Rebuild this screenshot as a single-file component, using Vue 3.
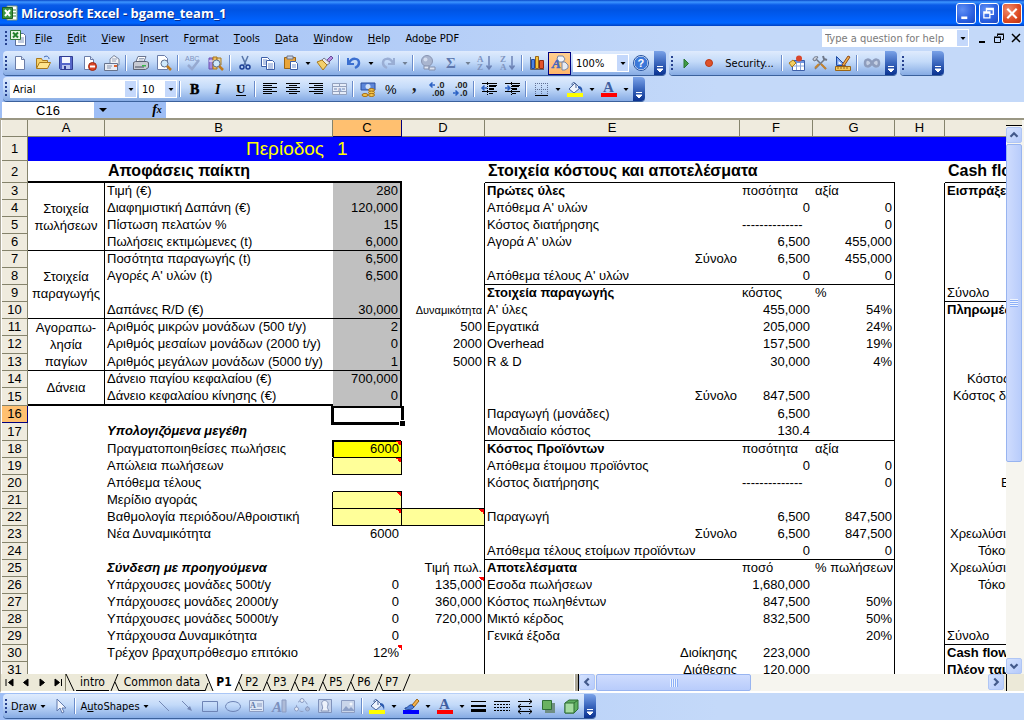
<script setup>
const menus = [
  ['', 'F', 'ile'], ['', 'E', 'dit'], ['', 'V', 'iew'], ['', 'I', 'nsert'], ['F', 'o', 'rmat'],
  ['', 'T', 'ools'], ['', 'D', 'ata'], ['', 'W', 'indow'], ['', 'H', 'elp'], ['Ado', 'b', 'e PDF'],
]

const page = '<path d="M3.5 1.5h6l3 3v10h-9z" fill="#fff" stroke="#6b7da8"/><path d="M9.5 1.5v3h3" fill="#dbe5f7" stroke="#6b7da8"/>'
const lens = '<circle cx="8.5" cy="8.5" r="3.5" fill="#cfe9fb" stroke="#5d6f8f"/><path d="M11 11l4 4" stroke="#c07a1c" stroke-width="2.5"/>'
const bucket = '<path d="M2 8l6-6 5 5-6 5z" fill="#eef4fd" stroke="#4a6499"/><path d="M5 4c0-4 4-3 4 1v2" fill="none" stroke="#4a6499"/><path d="M11 5c4 0 5 3 4 7-1-3-2-4-4-5z" fill="#2c5bb0"/>'
const bars = (list) => list.map(([x, y, w]) => `<path d="M${x} ${y}h${w}" stroke="#000"/>`).join('')

const icons = {
  excel: '<path d="M5 1h10v14H5z" fill="#fff" stroke="#7d9a7d"/><path d="M11 5h3M11 8h3M11 11h3" stroke="#3f8a3f"/><path d="M.5 2.5h10v11H.5z" fill="#3c9440" stroke="#1f5f24"/><path d="M3 5l5 6M8 5l-5 6" stroke="#fff" stroke-width="2"/>',
  book: '<path d="M5.5 3.5h8l2 2v10h-10z" fill="#fff" stroke="#5a6f9e"/><path d="M8 8h6M8 10h6M8 12h6" stroke="#7f94c0"/><path d="M.5.5h10v9H.5z" fill="#e9f5e4" stroke="#2f7a35"/><path d="M3 2.5l5 5M8 2.5l-5 5" stroke="#23812b" stroke-width="2"/>',
  new: page,
  open: '<path d="M1.5 13V3.5h5l1 2h5V8" fill="#f7d36a" stroke="#a9791d"/><path d="M1.5 13.5l3-6h11l-3 6z" fill="#ffe48c" stroke="#a9791d"/><path d="M9 2c3-2 5 0 5 2" fill="none" stroke="#3a65b5"/>',
  save: '<path d="M1.5 1.5h13v13h-12l-1-1z" fill="#5566c9" stroke="#303c92"/><path d="M4 2h8v6H4z" fill="#f4f6ff"/><path d="M4 10h8v4H4z" fill="#b9c4ee"/><path d="M6 11h2v3H6z" fill="#303c92"/>',
  perm: page + '<circle cx="11.5" cy="11.5" r="4" fill="#dc4526" stroke="#9c2a14"/><path d="M9 11.5h5" stroke="#fff" stroke-width="2"/>',
  mail: '<path d="M6 4l4-3.5 5 3.5v6H6z" fill="#f2f4f8" stroke="#7b869c"/><path d="M8 4h5M8 6h4" stroke="#9aa5ba"/><path d="M.5 8.5h13v7H.5z" fill="#e8ecf4" stroke="#66728c"/><path d="M3 11h5M3 13h4" stroke="#8995ad"/><path d="M10 10h3v2h-3z" fill="#e0642f"/>',
  print: '<path d="M5 1.5h8l-2 5H3z" fill="#fff" stroke="#6b7690"/><path d="M6 3.5h5M5.5 5h5" stroke="#9ba6bb"/><path d="M.5 7.5l2-1h11l2 1v5l-3 2H.5z" fill="#c6cad3" stroke="#5b6374"/><path d="M2 12h9" stroke="#4a5160"/><path d="M9 10h4v1.5H9z" fill="#39b54a"/>',
  preview: '<path d="M1.5.5h7l3 3v11h-10z" fill="#fff" stroke="#6b7da8"/>' + lens,
  spell: '<text x="0" y="6" font-family="Liberation Sans, sans-serif" font-size="7" fill="#7f94bf">ABC</text><path d="M3 10l4 4 7-9" fill="none" stroke="#96a9d0" stroke-width="2.5"/>',
  research: '<path d="M1 3h4v11H1z" fill="#a48be0" stroke="#6a4fb0"/><path d="M5 2h4v12H5z" fill="#f0bd5d" stroke="#a9791d"/><path d="M9 3h4v7H9z" fill="#e6d7a0" stroke="#a9791d"/><path d="M1 6h8" stroke="#fff"/>' + lens,
  cut: '<path d="M5 1l4 9M11 1L7 10" stroke="#5876a8" stroke-width="1.5"/><circle cx="5" cy="12" r="2" fill="none" stroke="#1c3f94" stroke-width="1.5"/><circle cx="11" cy="12" r="2" fill="none" stroke="#1c3f94" stroke-width="1.5"/>',
  copy: '<path d="M1.5 2.5h6l2 2v7h-8z" fill="#fff" stroke="#3d5fa8"/><path d="M6.5 5.5h6l2 2v7h-8z" fill="#fff" stroke="#3d5fa8"/><path d="M8 9h5M8 11h5M8 13h5M3 5h4M3 7h3M3 9h3" stroke="#7390cf"/>',
  paste: '<path d="M1.5 2.5h11v11h-11z" fill="#e9a53a" stroke="#9a6415"/><path d="M4 1h6v3H4z" fill="#cfd5e2" stroke="#6d7588"/><path d="M7.5 6.5h5l2 2v6h-7z" fill="#fff" stroke="#3d5fa8"/><path d="M9 10h4M9 12h4" stroke="#7390cf"/>',
  brush: '<path d="M10 5l4-4 2 2-4 4z" fill="#b98adf" stroke="#6a4b9a"/><path d="M7 3l6 5-3 2-5-5z" fill="#e6e8ee" stroke="#7a7f8f"/><path d="M5 5l5 5-4 5-6-8z" fill="#f2cf6b" stroke="#a9791d"/>',
  undo: '<path d="M2 3v6h6" fill="none" stroke="#3b6fd0" stroke-width="2"/><path d="M3 8c3-6 10-5 10 0 0 3-2 4-4 5" fill="none" stroke="#3b6fd0" stroke-width="2.5"/>',
  redo: '<path d="M14 3v6H8" fill="none" stroke="#9aaed4" stroke-width="2"/><path d="M13 8C10 2 3 3 3 8c0 3 2 4 4 5" fill="none" stroke="#9aaed4" stroke-width="2.5"/>',
  link: '<circle cx="7" cy="6" r="5.5" fill="#a9b5cf" stroke="#8995b3"/><circle cx="5.5" cy="4.5" r="2" fill="#d3dcee"/><path d="M4 11h5v3H4zM9 12h6v3H9z" fill="#dbe3f2" stroke="#8591ad"/>',
  sum: '<text x="3" y="13" font-family="Liberation Serif, serif" font-size="15" font-weight="bold" fill="#6079ae">Σ</text>',
  az: '<text x="0" y="7" font-family="Liberation Serif, serif" font-size="9" font-weight="bold" fill="#7f94bf">A</text><text x="0" y="15" font-family="Liberation Serif, serif" font-size="9" font-weight="bold" fill="#7f94bf">Z</text><path d="M12 1v13M9.5 10.5l2.5 3.5 2.5-3.5" fill="none" stroke="#6d83b5" stroke-width="1.5"/>',
  za: '<text x="0" y="7" font-family="Liberation Serif, serif" font-size="9" font-weight="bold" fill="#7f94bf">Z</text><text x="0" y="15" font-family="Liberation Serif, serif" font-size="9" font-weight="bold" fill="#7f94bf">A</text><path d="M12 1v13M9.5 10.5l2.5 3.5 2.5-3.5" fill="none" stroke="#6d83b5" stroke-width="1.5"/>',
  chart: '<path d="M1.5 2v12.5H15" fill="none" stroke="#5b6374"/><path d="M2.5 4.5h3v9h-3z" fill="#4b83e0" stroke="#1f4aa0"/><path d="M6.5 1.5h3v12h-3z" fill="#f5c33b" stroke="#9a6415"/><path d="M10.5 5.5h4v8h-4z" fill="#e2532b" stroke="#8f2a10"/>',
  drawing: '<path d="M6 1h5l2 3-2 3H7L5 4z" fill="#f3f5fa" stroke="#7a86a3"/><path d="M10 7h3l3 3v3l-3 2h-3z" fill="#e7ebf3" stroke="#7a86a3"/><text x="0" y="13" font-family="Liberation Serif, serif" font-size="13" font-weight="bold" font-style="italic" fill="#4667bd" stroke="#4667bd" stroke-width=".5">A</text>',
  help: '<circle cx="8" cy="8" r="7" fill="#3c78d8" stroke="#fff"/><circle cx="8" cy="8" r="7.5" fill="none" stroke="#2452a0"/><text x="4.5" y="12" font-family="Liberation Sans, sans-serif" font-size="11" font-weight="bold" fill="#fff">?</text>',
  play: '<path d="M6 4l4.5 4.5L6 13z" fill="#3f9b45" stroke="#2b7431"/>',
  record: '<circle cx="8" cy="8" r="3.5" fill="#e0522a" stroke="#b93a18"/>',
  toolbox: '<path d="M3.5 5.5h12v10h-12z" fill="#fff" stroke="#3d5fa8"/><path d="M4 6h11v2H4z" fill="#6d93e0"/><path d="M4 11h11M7.5 8v7M11.5 8v7" stroke="#8ba6da"/><circle cx="10" cy="3.5" r="3" fill="#d8452b"/><path d="M0 8l4-3 3 3-4 4z" fill="#f3cf5e" stroke="#a9791d"/>',
  tools: '<path d="M3 3l11 11M13 4L3 14" stroke="#6f7788" stroke-width="1.5"/><path d="M1 5c0-3 3-4 5-3L3 6z" fill="#c9ced9" stroke="#6f7788"/><path d="M11 1l1 3 3 1" fill="none" stroke="#6f7788" stroke-width="2"/><path d="M9 9l5 5M7 9l-4 4" stroke="#c38432" stroke-width="2"/>',
  design: '<path d="M1.5 1.5v9h9z" fill="#7ea6ef" stroke="#1f4aa0"/><path d="M3.5 6v3h3z" fill="#fff"/><path d="M7 10l6-9 2 1-6 9z" fill="#f3b04a" stroke="#8f4b18"/><path d="M.5 11.5h15v4H.5z" fill="#f2c95c" stroke="#9a6415"/><path d="M3 12v2M6 12v2M9 12v2M12 12v2" stroke="#9a6415"/>',
  infinity: '<path d="M8 8C5 3 1 4 1 8s4 5 7 0 7-4 7 0-4 5-7 0" fill="#c5d0e4" stroke="#8e9dbd" stroke-width="2.5"/>',
  bold: '<text x="3" y="13" font-family="Liberation Serif, serif" font-size="14" font-weight="bold" fill="#000" stroke="#000" stroke-width=".5">B</text>',
  italic: '<text x="5" y="13" font-family="Liberation Serif, serif" font-size="14" font-weight="bold" font-style="italic" fill="#000">I</text>',
  underline: '<text x="3" y="12" font-family="Liberation Serif, serif" font-size="13" font-weight="bold" fill="#000">U</text><path d="M3 14.5h10" stroke="#000"/>',
  left: bars([[1, 2.5, 14], [1, 4.5, 9], [1, 6.5, 14], [1, 8.5, 9], [1, 10.5, 14], [1, 12.5, 9]]),
  center: bars([[1, 2.5, 14], [4, 4.5, 8], [1, 6.5, 14], [4, 8.5, 8], [1, 10.5, 14], [4, 12.5, 8]]),
  right: bars([[1, 2.5, 14], [6, 4.5, 9], [1, 6.5, 14], [6, 8.5, 9], [1, 10.5, 14], [6, 12.5, 9]]),
  merge: '<path d="M1.5 2.5h14v11h-14zM1 5.5h15M1 10.5h15M8.5 2v3M8.5 11v2" fill="#e6edf9" stroke="#93a1bd"/><path d="M3 8h3M14 8h-3" stroke="#6f84b3"/><text x="7" y="10" font-family="Liberation Sans, sans-serif" font-size="6" fill="#6f84b3">a</text>',
  money: '<path d="M1 2h14v7H1z" fill="#5c86d9" stroke="#2a4f9e"/><circle cx="8" cy="5.5" r="2.5" fill="#cfe0fa"/><ellipse cx="11.5" cy="9" rx="3" ry="1.5" fill="#f5c64a" stroke="#a46c14"/><ellipse cx="11.5" cy="11.5" rx="3" ry="1.5" fill="#f5c64a" stroke="#a46c14"/><ellipse cx="11.5" cy="14" rx="3" ry="1.5" fill="#f5c64a" stroke="#a46c14"/><ellipse cx="5" cy="14" rx="3" ry="1.5" fill="#f5c64a" stroke="#a46c14"/>',
  percent: '<text x="2" y="13" font-family="Liberation Sans, sans-serif" font-size="13" fill="#000">%</text>',
  comma: '<text x="6" y="10" font-family="Liberation Serif, serif" font-size="18" font-weight="bold" fill="#222">,</text>',
  incdec: '<path d="M1 4h5M3.5 1.5L1 4l2.5 2.5" fill="none" stroke="#2c62c4" stroke-width="1.5"/><text x="8" y="7" font-family="Liberation Sans, sans-serif" font-size="9" font-weight="bold" fill="#222">.0</text><text x="3" y="15" font-family="Liberation Sans, sans-serif" font-size="9" font-weight="bold" fill="#222">.00</text>',
  decdec: '<text x="3" y="7" font-family="Liberation Sans, sans-serif" font-size="9" font-weight="bold" fill="#222">.00</text><path d="M1 12h5M3.5 9.5L6 12l-2.5 2.5" fill="none" stroke="#2c62c4" stroke-width="1.5"/><text x="8" y="15" font-family="Liberation Sans, sans-serif" font-size="9" font-weight="bold" fill="#222">.0</text>',
  dedent: bars([[1, 2.5, 15], [8, 4.5, 8], [8, 7.5, 5], [1, 10.5, 15], [8, 12.5, 4]]) + '<path d="M8 5h7M8 8h5" stroke="#000" stroke-width="2"/><path d="M1 7h5M3.5 4.5L1 7l2.5 2.5" fill="none" stroke="#2c62c4" stroke-width="1.5"/><path d="M6.5 1v14" stroke="#000" stroke-dasharray="1 1"/>',
  indent: bars([[1, 2.5, 15], [8, 4.5, 8], [8, 7.5, 5], [1, 10.5, 15], [8, 12.5, 4]]) + '<path d="M8 5h7M8 8h5" stroke="#000" stroke-width="2"/><path d="M1 7h5M3.5 4.5L6 7l-2.5 2.5" fill="none" stroke="#2c62c4" stroke-width="1.5"/><path d="M7.5 1v14" stroke="#000" stroke-dasharray="1 1"/>',
  borders: '<path d="M2.5 2v12M8.5 2v12M14.5 2v12M2 2.5h13M2 8.5h13" fill="none" stroke="#5f6f94" stroke-dasharray="1 1"/><path d="M2 14.5h13" stroke="#000"/>',
  fill: bucket + '<path d="M0 12h16v4H0z" fill="#ff0"/>',
  fontcolor: '<text x="2" y="11" font-family="Liberation Serif, serif" font-size="15" font-weight="bold" fill="#3f5fa0">A</text><path d="M0 12h16v4H0z" fill="#f00"/>',
  linecolor: '<path d="M9 7l5-6 2 2-5 6z" fill="#f3b04a" stroke="#9a6415"/><path d="M2 10c3 0 4-4 7-3l2 2c-2 3-5 3-9 2z" fill="#4f7fd8" stroke="#244a99"/><path d="M0 12h16v4H0z" fill="#00f"/>',
  pointer: '<path d="M4 1v12l3-3 2 5 2-1-2-4h4z" fill="#f2f6fd" stroke="#5f78ad"/>',
  line: '<path d="M3 3l10 10" stroke="#7488b5"/>',
  arrow: '<path d="M3 3l8 8" stroke="#7488b5"/><path d="M13 13l-5-2 3-3z" fill="#7488b5"/>',
  rect: '<path d="M.5 3.5h15v10H.5z" fill="none" stroke="#6d83b5"/>',
  oval: '<ellipse cx="8" cy="8.5" rx="7.5" ry="5" fill="none" stroke="#6d83b5"/>',
  textbox: '<path d="M1.5 2.5h14v11h-14z" fill="#dce5f5" stroke="#8b9cc2"/><text x="2" y="10" font-family="Liberation Serif, serif" font-size="8" font-weight="bold" fill="#6178a8">A</text><path d="M9 6h5M9 8h5M3 11.5h11" stroke="#8b9cc2"/>',
  wordart: '<path d="M11 2h4v12h-4z" fill="#aebbd7" stroke="#8b9cc2"/><text x="1" y="14" font-family="Liberation Serif, serif" font-size="15" font-weight="bold" font-style="italic" fill="#7c90bd">A</text>',
  diagram: '<circle cx="8" cy="8" r="5.5" fill="none" stroke="#8b9cc2" stroke-dasharray="4 3"/><circle cx="8" cy="2.5" r="2" fill="#e5ecf8" stroke="#8b9cc2"/><circle cx="2.5" cy="11" r="2" fill="#e5ecf8" stroke="#8b9cc2"/><circle cx="13.5" cy="11" r="2" fill="#aebbd7" stroke="#8b9cc2"/>',
  clipart: '<path d="M1.5 1.5h13v13h-13z" fill="#c5d2ea" stroke="#7f92bc"/><path d="M5 7c-2-6 7-6 6 0-1 3-1 2 1 6H4c2-3 2-3 1-6z" fill="#edf2fb" stroke="#8293b8"/>',
  picture: '<path d="M1.5 2.5h13v12h-13z" fill="#c9d5ea" stroke="#8b9cc2"/><path d="M2 13l4-5 3 3 2-2 4 4z" fill="#8da0c7"/><circle cx="11" cy="6" r="1.5" fill="#f4f7fc"/>',
  linestyle: '<path d="M0 3.5h15" stroke="#000"/><path d="M0 8h15" stroke="#000" stroke-width="2"/><path d="M0 12.5h15" stroke="#000" stroke-width="3"/>',
  dash: '<path d="M0 3.5h16" stroke="#000"/><path d="M0 6.5h16M0 9.5h16M0 12.5h16" stroke="#000" stroke-dasharray="2 1"/>',
  arrowstyle: '<path d="M1 3.5h14M1 8.5h14M1 13.5h14M12 1l3 2.5L12 6M4 6L1 8.5 4 11M12 11l3 2.5-3 2.5M4 11l-3 2.5L4 16" fill="none" stroke="#000"/>',
  shadow: '<path d="M5 5h10v10H5z" fill="#6f8f83"/><path d="M2.5 2.5h9v9h-9z" fill="#69b25f" stroke="#2f6f35"/>',
  cube: '<path d="M2 5l4-3h9v9l-4 4H2z" fill="#5fae60" stroke="#2f6f35"/><path d="M2 5h9v10H2z" fill="#a4dba0" stroke="#2f6f35"/><path d="M11 5l4-3" stroke="#2f6f35"/>',
  drop: '<path d="M5.5 7h5l-2.5 3z" fill="#000"/>',
}

const standard = [
  'new', 'open', 'save', 'perm', 'mail', '|', 'print', 'preview', '|', 'spell', 'research', '|', 'cut', 'copy',
  'paste', 'v', 'brush', '|', 'undo', 'v', 'redo', 'g', '|', 'link', 'sum', 'g', 'az', 'za', '|', 'chart', 'drawing',
]
const formatting = [
  '|', 'bold', 'italic', 'underline', '|', 'left', 'center', 'right', 'merge', '|', 'money', 'percent', 'comma',
  'incdec', 'decdec', '|', 'dedent', 'indent', '|', 'borders', 'v', 'fill', 'v', 'fontcolor', 'v',
]
const macroA = ['play', 'record']
const macroB = ['|', 'toolbox', 'tools', 'design', '|', 'infinity']
const shapes = [
  'line', 'arrow', 'rect', 'oval', 'textbox', 'wordart', 'diagram', 'clipart', 'picture', '|', 'fill', 'v',
  'linecolor', 'v', 'fontcolor', 'v', 'linestyle', 'dash', 'arrowstyle', 'shadow', 'cube',
]
const kind = (t) => (t === '|' ? 'sep' : t === 'v' || t === 'g' ? 'more' : 'icon')

const columns = ['A', 'B', 'C', 'D', 'E', 'F', 'G', 'H', '']

const rows = [
  { A: '', B: 'Περίοδος', C: '1' },
  { B: 'Αποφάσεις παίκτη', E: 'Στοιχεία κόστους και αποτελέσματα', I: 'Cash flow' },
  { A: ['Στοιχεία', 'πωλήσεων'], B: 'Τιμή (€)', C: '280', E: '*Πρώτες ύλες', F: '<ποσότητα', G: '<αξία', I: '*Εισπράξεις' },
  { B: 'Διαφημιστική Δαπάνη (€)', C: '120,000', E: "Απόθεμα Α' υλών", F: '0', G: '0' },
  { B: 'Πίστωση πελατών %', C: '15', E: 'Κόστος διατήρησης', F: '<--------------', G: '0' },
  { B: 'Πωλήσεις εκτιμώμενες (t)', C: '6,000', E: "Αγορά Α' υλών", F: '6,500', G: '455,000' },
  { A: ['Στοιχεία', 'παραγωγής'], B: 'Ποσότητα παραγωγής (t)', C: '6,500', E: '>Σύνολο', F: '6,500', G: '455,000' },
  { B: "Αγορές Α' υλών (t)", C: '6,500', E: "Απόθεμα τέλους Α' υλών", F: '0', G: '0' },
  { E: '*Στοιχεία παραγωγής', F: '<κόστος', G: '<%', I: 'Σύνολο' },
  { B: 'Δαπάνες R/D (€)', C: '30,000', D: 'Δυναμικότητα', E: "Α' ύλες", F: '455,000', G: '54%', I: '*Πληρωμές' },
  { A: ['Αγοραπω-', 'λησία', 'παγίων'], B: 'Αριθμός μικρών μονάδων (500 t/y)', C: '2', D: '500', E: 'Εργατικά', F: '205,000', G: '24%' },
  { B: 'Αριθμός μεσαίων μονάδων (2000 t/y)', C: '0', D: '2000', E: 'Overhead', F: '157,500', G: '19%' },
  { B: 'Αριθμός μεγάλων μονάδων (5000 t/y)', C: '1', D: '5000', E: 'R & D', F: '30,000', G: '4%' },
  { A: ['Δάνεια'], B: 'Δάνειο παγίου κεφαλαίου (€)', C: '700,000', I: 'Κόστος', indent: 22 },
  { B: 'Δάνειο κεφαλαίου κίνησης (€)', C: '0', E: '>Σύνολο', F: '847,500', I: 'Κόστος δ', indent: 8 },
  { E: 'Παραγωγή (μονάδες)', F: '6,500' },
  { B: '/Υπολογιζόμενα μεγέθη', E: 'Μοναδιαίο κόστος', F: '130.4' },
  { B: 'Πραγματοποιηθείσες πωλήσεις', C: '6000', E: '*Κόστος Προϊόντων', F: '<ποσότητα', G: '<αξία' },
  { B: 'Απώλεια πωλήσεων', E: 'Απόθεμα έτοιμου προϊόντος', F: '0', G: '0' },
  { B: 'Απόθεμα τέλους', E: 'Κόστος διατήρησης', F: '<--------------', G: '0', I: 'Ε', indent: 56 },
  { B: 'Μερίδιο αγοράς' },
  { B: 'Βαθμολογία περιόδου/Αθροιστική', E: 'Παραγωγή', F: '6,500', G: '847,500' },
  { B: 'Νέα Δυναμικότητα', C: '6000', E: '>Σύνολο', F: '6,500', G: '847,500', I: 'Χρεωλύσια', indent: 5 },
  { E: 'Απόθεμα τέλους ετοίμων προϊόντων', F: '0', G: '0', I: 'Τόκοι', indent: 33 },
  { B: '/Σύνδεση με προηγούμενα', D: 'Τιμή πωλ.', E: '*Αποτελέσματα', F: '<ποσό', G: '<% πωλήσεων', I: 'Χρεωλύσια', indent: 5 },
  { B: 'Υπάρχουσες μονάδες 500t/y', C: '0', D: '135,000', E: 'Εσοδα πωλήσεων', F: '1,680,000', I: 'Τόκοι', indent: 33 },
  { B: 'Υπάρχουσες μονάδες 2000t/y', C: '0', D: '360,000', E: 'Κόστος πωληθέντων', F: '847,500', G: '50%' },
  { B: 'Υπάρχουσες μονάδες 5000t/y', C: '0', D: '720,000', E: 'Μικτό κέρδος', F: '832,500', G: '50%' },
  { B: 'Υπάρχουσα Δυναμικότητα', C: '0', E: 'Γενικά έξοδα', G: '20%', I: 'Σύνολο' },
  { B: 'Τρέχον βραχυπρόθεσμο επιτόκιο', C: '12%', E: '>Διοίκησης', F: '223,000', I: '*Cash flow' },
  { E: '>Διάθεσης', F: '120,000', I: '*Πλέον ταμείο' },
]

const spans = { 3: 4, 7: 4, 11: 3, 14: 2 }
const hasA = (n) => n < 3 || n > 15 || n in spans
const cols = ['B', 'C', 'D', 'E', 'F', 'G', 'H', 'I']
const notes = ['C18', 'C19', 'C21', 'C22', 'D22', 'D26', 'C30']
const text = (v) => (v || '').replace(/^[*<>/]/, '')

function look(c, n, v = '') {
  const out = []
  if ('CDFG'.includes(c) && n > 2) out.push('num')
  if (v[0] === '*') out.push('strong')
  if (v[0] === '/') out.push('strong', 'slant')
  if (v[0] === '<') out.push('start')
  if (v[0] === '>') out.push('num')
  const inInput = n >= 3 && n <= 15
  if ('BC'.includes(c)) {
    if ([6, 10, 13].includes(n)) out.push('under')
    if (n === 2 || (n === 15 && c === 'B')) out.push('under2')
  }
  if (c === 'C' && inInput) out.push('grey', 'edge2')
  if (c === 'B' && [19, 21, 22].includes(n)) out.push('edge')
  if (c === 'C' && [19, 21, 22].includes(n)) out.push('pale', 'edge', 'under')
  if (c === 'C' && n === 20) out.push('under')
  if (c === 'C' && n === 18) out.push('bright', 'edge', 'under')
  if (c === 'D' && n === 22) out.push('pale', 'under')
  if (c === 'D' && n === 21) out.push('under')
  if (c === 'D' && n === 10) out.push('small')
  if ('DGH'.includes(c) && n > 2) out.push('edge')
  if ('EFG'.includes(c) && [2, 8, 17, 24].includes(n)) out.push('under')
  if (c === 'I' && [2, 9, 29].includes(n)) out.push('under')
  return out
}

const tabs = ['intro', 'Common data', 'P1', 'P2', 'P3', 'P4', 'P5', 'P6', 'P7']
const tabEdge = (i) => (i === 2 ? 'M1 0l7 17M3 9L0 17' : i === 9 ? 'M9 0L2 17' : i === 0 ? 'M0 0l8 17' : 'M9 0L2 17M6 8l4 9')
const sheetNav = ['M4 4v7M11 4v7L6.5 7.5z', 'M10 4v7L5.5 7.5z', 'M6 4v7l4.5-3.5z', 'M11.5 4v7M5 4v7l4.5-3.5z']
const navNames = ['First sheet', 'Previous sheet', 'Next sheet', 'Last sheet']
</script>

<template>
  <div class="app">
    <header class="title">
      <svg class="ico" viewBox="0 0 16 16" v-html="icons.excel" />
      <h1>Microsoft Excel - bgame_team_1</h1>
      <button class="win" aria-label="Minimize"><svg viewBox="0 0 21 21"><path d="M5 14h7v3H5z" fill="#fff" /></svg></button>
      <button class="win" aria-label="Restore">
        <svg viewBox="0 0 21 21"><path d="M7.5 8V4.5h8v7H12M7 6h9M4.5 8.5h7v7h-7zM4 10h8" fill="none" stroke="#fff" stroke-width="1.5" /></svg>
      </button>
      <button class="win close" aria-label="Close">
        <svg viewBox="0 0 21 21"><path d="M5 5l11 11M16 5L5 16" stroke="#fff" stroke-width="2.5" /></svg>
      </button>
    </header>

    <nav class="menu">
      <i class="grip" />
      <svg class="ico" viewBox="0 0 16 16" v-html="icons.book" />
      <button v-for="m in menus" :key="m[2]" class="menuitem">{{ m[0] }}<u>{{ m[1] }}</u>{{ m[2] }}</button>
      <span class="space" />
      <div class="combo ask">
        <input aria-label="Type a question for help" placeholder="Type a question for help" />
        <button class="down" aria-label="Show questions"><svg viewBox="0 0 16 16" v-html="icons.drop" /></button>
      </div>
      <button class="doc" aria-label="Minimize workbook"><svg viewBox="0 0 16 16"><path d="M5 11h6v2H5z" /></svg></button>
      <button class="doc" aria-label="Restore workbook">
        <svg viewBox="0 0 16 16"><path d="M6.5 6V4.5h6v5H11M6 4h7M3.5 7.5h6v5h-6zM3 7h7" fill="none" stroke="#000" /></svg>
      </button>
      <button class="doc" aria-label="Close workbook"><svg viewBox="0 0 16 16"><path d="M4 4l8 8M12 4l-8 8" stroke="#000" stroke-width="1.5" /></svg></button>
    </nav>

    <div class="dock">
      <div class="bar" role="toolbar" aria-label="Standard">
        <i class="grip" />
        <template v-for="(t, i) in standard" :key="i">
          <i v-if="kind(t) === 'sep'" class="sep" />
          <button v-else-if="kind(t) === 'more'" class="more" :class="{ off: t === 'g' }" aria-label="More"><svg viewBox="0 0 16 16" v-html="icons.drop" /></button>
          <button v-else class="tool" :class="{ on: t === 'drawing' }" :aria-label="t"><svg class="ico" viewBox="0 0 16 16" v-html="icons[t]" /></button>
        </template>
        <div class="combo zoom">
          <select aria-label="Zoom"><option>100%</option></select>
          <span class="down"><svg viewBox="0 0 16 16" v-html="icons.drop" /></span>
        </div>
        <button class="tool" aria-label="help"><svg class="ico" viewBox="0 0 16 16" v-html="icons.help" /></button>
        <button class="cap" aria-label="Standard toolbar options"><svg viewBox="0 0 12 12"><path d="M3 3.5h6M3 6h6l-3 3z" /></svg></button>
      </div>
      <div class="bar" role="toolbar" aria-label="Visual Basic">
        <i class="grip" />
        <button v-for="t in macroA" :key="t" class="tool" :aria-label="t"><svg class="ico" viewBox="0 0 16 16" v-html="icons[t]" /></button>
        <button class="label security">Security...</button>
        <template v-for="(t, i) in macroB" :key="i">
          <i v-if="t === '|'" class="sep" />
          <button v-else class="tool" :aria-label="t"><svg class="ico" viewBox="0 0 16 16" v-html="icons[t]" /></button>
        </template>
        <button class="cap" aria-label="Visual Basic toolbar options"><svg viewBox="0 0 12 12"><path d="M3 3.5h6M3 6h6l-3 3z" /></svg></button>
      </div>
      <div class="bar" role="toolbar" aria-label="Custom">
        <i class="grip" />
        <span class="blank" />
        <button class="cap" aria-label="Custom toolbar options"><svg viewBox="0 0 12 12"><path d="M3 3.5h6M3 6h6l-3 3z" /></svg></button>
      </div>
    </div>

    <div class="dock">
      <div class="bar" role="toolbar" aria-label="Formatting">
        <i class="grip" />
        <div class="combo font">
          <select aria-label="Font"><option>Arial</option></select>
          <span class="down"><svg viewBox="0 0 16 16" v-html="icons.drop" /></span>
        </div>
        <div class="combo size">
          <select aria-label="Font size"><option>10</option></select>
          <span class="down"><svg viewBox="0 0 16 16" v-html="icons.drop" /></span>
        </div>
        <template v-for="(t, i) in formatting" :key="i">
          <i v-if="kind(t) === 'sep'" class="sep" />
          <button v-else-if="kind(t) === 'more'" class="more" aria-label="More"><svg viewBox="0 0 16 16" v-html="icons.drop" /></button>
          <button v-else class="tool" :aria-label="t"><svg class="ico" viewBox="0 0 16 16" v-html="icons[t]" /></button>
        </template>
        <button class="cap" aria-label="Formatting toolbar options"><svg viewBox="0 0 12 12"><path d="M3 3.5h6M3 6h6l-3 3z" /></svg></button>
      </div>
    </div>

    <div class="formula">
      <input class="name" aria-label="Name box" value="C16" />
      <button class="namedrop" aria-label="Show names"><svg viewBox="0 0 16 16"><path d="M4 6h8l-4 4z" /></svg></button>
      <button class="fx" aria-label="Insert function">f<small>x</small></button>
      <input class="entry" aria-label="Formula" />
    </div>

    <main class="sheet">
      <div class="pane">
        <table>
          <colgroup>
            <col class="w0" /><col class="wA" /><col class="wB" /><col class="wC" /><col class="wD" /><col class="wE" />
            <col class="wF" /><col class="wG" /><col class="wH" /><col class="wI" />
          </colgroup>
          <thead>
            <tr>
              <th></th>
              <th v-for="c in columns" :key="c" scope="col" :class="{ picked: c === 'C' }">{{ c }}</th>
            </tr>
          </thead>
          <tbody>
            <tr v-for="(r, i) in rows" :key="i" :class="{ banner: i === 0, heading: i === 1, tall: i === 14 || i === 16 }">
              <th scope="row" :class="{ picked: i === 15 }">{{ i + 1 }}</th>
              <td
                v-if="hasA(i + 1)"
                :rowspan="spans[i + 1] || 1"
                :class="{ group: i + 1 in spans, under2: i === 1 || i === 13 }"
              ><div v-for="line in r.A || []" :key="line">{{ line }}</div></td>
              <td
                v-for="c in cols"
                :key="c"
                :class="look(c, i + 1, r[c])"
                :style="c === 'I' && r.indent ? { paddingLeft: r.indent + 'px' } : null"
              >{{ text(r[c]) }}<i v-if="notes.includes(c + (i + 1))" class="note" /><i v-if="c === 'C' && i === 15" class="cursor" /></td>
            </tr>
          </tbody>
        </table>
      </div>
      <div class="vscroll">
        <i class="split" />
        <button aria-label="Scroll up"><svg viewBox="0 0 16 16"><path d="M4 10l4-4 4 4" /></svg></button>
        <div class="thumb"><i /></div>
        <span class="space" />
        <button aria-label="Scroll down"><svg viewBox="0 0 16 16"><path d="M4 6l4 4 4-4" /></svg></button>
      </div>
    </main>

    <div class="tabs">
      <button v-for="(d, i) in sheetNav" :key="d" class="nav" :aria-label="navNames[i]"><svg viewBox="0 0 16 16"><path :d="d" /></svg></button>
      <template v-for="(t, i) in tabs" :key="t">
        <svg class="slope" viewBox="0 0 10 17">
          <path v-if="i === 2" d="M1 0h9v17H8z" fill="#fff" stroke="none" />
          <path v-if="i === 3" d="M0 0h9L2 17H0z" fill="#fff" stroke="none" />
          <path :d="tabEdge(i)" />
        </svg>
        <button class="tab" :class="{ current: t === 'P1' }">{{ t }}</button>
      </template>
      <svg class="slope" viewBox="0 0 10 17"><path :d="tabEdge(9)" /></svg>
      <span class="space" />
      <i class="tabsplit" />
      <div class="hscroll">
        <button aria-label="Scroll left"><svg viewBox="0 0 16 16"><path d="M10 4L6 8l4 4" /></svg></button>
        <div class="thumb"><i /></div>
        <span class="space" />
        <button aria-label="Scroll right"><svg viewBox="0 0 16 16"><path d="M6 4l4 4-4 4" /></svg></button>
      </div>
      <i class="corner" />
    </div>

    <footer class="dock foot">
      <div class="bar" role="toolbar" aria-label="Drawing">
        <i class="grip" />
        <button class="label draw">D<u>r</u>aw<svg viewBox="4 0 8 16" v-html="icons.drop" /></button>
        <button class="tool" aria-label="pointer"><svg class="ico" viewBox="0 0 16 16" v-html="icons.pointer" /></button>
        <i class="sep" />
        <button class="label auto">A<u>u</u>toShapes<svg viewBox="4 0 8 16" v-html="icons.drop" /></button>
        <template v-for="(t, i) in shapes" :key="i">
          <i v-if="kind(t) === 'sep'" class="sep" />
          <button v-else-if="kind(t) === 'more'" class="more" aria-label="More"><svg viewBox="0 0 16 16" v-html="icons.drop" /></button>
          <button v-else class="tool" :aria-label="t"><svg class="ico" viewBox="0 0 16 16" v-html="icons[t]" /></button>
        </template>
        <button class="cap" aria-label="Drawing toolbar options"><svg viewBox="0 0 12 12"><path d="M3 3.5h6M3 6h6l-3 3z" /></svg></button>
      </div>
    </footer>
  </div>
</template>

<style>
html, body { margin: 0; overflow: hidden; }
</style>

<style scoped>
.app {
  display: flex; flex-direction: column; height: 100vh; overflow: hidden;
  font: 11px "DejaVu Sans Condensed", "DejaVu Sans", sans-serif; color: #000;
  background: linear-gradient(90deg, #9ebef5, #c4d9f9 70%);
}
button, input, select { font: inherit; color: inherit; border: 0; border-radius: 0; padding: 0; margin: 0; background: none; outline: 0; min-width: 0; }
button { display: flex; align-items: center; justify-content: center; flex: none; white-space: nowrap; }
svg { display: block; flex: none; overflow: visible; }
.ico { width: 16px; height: 16px; }
.space { flex: 1; }

.title {
  display: flex; align-items: center; gap: 3px; height: 26px; padding: 0 2px; flex: none; box-sizing: border-box;
  background: linear-gradient(#0a48c9 0, #3d95ff 2px, #0a5be8 5px, #0054e3 10px, #0061fc 20px, #0066ff 23px, #0040c0 26px);
}
.title h1 { flex: 1; margin: 0; font: bold 13px "Open Sans", sans-serif; color: #fff; text-shadow: 1px 1px #0a2a86; white-space: nowrap; }
.win { width: 20px; height: 21px; border: 1px solid #fff; border-radius: 3px; background: radial-gradient(circle at 30% 30%, #5f8ff5, #2a5fe0 60%, #1c48c0); }
.win svg { width: 18px; height: 19px; }
.close { background: radial-gradient(circle at 30% 30%, #f08a6c, #dd4a22 60%, #b93210); }

.menu { display: flex; align-items: center; height: 24px; flex: none; padding: 0 0 0 5px; }
.menu .ico { margin: 0 2px; }
.menuitem { height: 20px; padding: 0 8px 0 7px; }
.menu .combo { width: 147px; height: 18px; margin-right: 4px; }
.doc { width: 17px; height: 18px; }
.doc svg { width: 16px; height: 16px; }
.grip {
  flex: none; width: 3px; height: 16px; box-sizing: border-box;
  background: repeating-linear-gradient(transparent 0 1px, #27418f 1px 3px, transparent 3px 4px);
  border-right: 1px solid transparent; background-clip: padding-box;
}

.dock { display: flex; gap: 3px; height: 26px; padding: 1px 0 0 3px; box-sizing: border-box; flex: none; }
.bar {
  display: flex; align-items: center; height: 24px; padding-left: 2px; border-radius: 4px;
  background: linear-gradient(#dfebfd, #c3daf9 45%, #86abe4); box-shadow: 0 1px #3b619c;
}
.tool { width: 23px; height: 23px; }
.on { background: linear-gradient(#ffcf8f, #ffb66a); border: 1px solid #000080; box-sizing: border-box; }
.sep { flex: none; width: 6px; height: 16px; background: linear-gradient(90deg, transparent 2px, #6a8ccb 2px 3px, #fff 3px 4px, transparent 4px); }
.more { width: 11px; height: 23px; }
.more svg { width: 16px; height: 16px; }
.off { opacity: .4; }
.label { height: 22px; }
.label svg { width: 8px; height: 16px; margin-left: 2px; }
.security { width: 59px; }
.draw { width: 41px; padding-left: 1px; box-sizing: border-box; }
.auto { width: 74px; }
.blank { width: 25px; }
.cap {
  align-self: stretch; width: 12px; margin-left: 2px; align-items: flex-end; border-radius: 0 4px 4px 0;
  background: linear-gradient(#7aa2e8, #3a66bd 50%, #0a3290);
}
.cap svg { width: 12px; height: 12px; stroke: #fff; fill: #fff; }
.combo { position: relative; display: flex; align-items: center; height: 18px; background: #fff; }
.combo select, .combo input { appearance: none; width: 100%; height: 18px; padding: 0 14px 0 3px; box-sizing: border-box; }
.combo input::placeholder { color: #7a7a7a; opacity: 1; }
.down { position: absolute; top: 1px; right: 1px; bottom: 1px; width: 11px; display: flex; align-items: center; justify-content: center; background: #c4d8fb; pointer-events: none; }
.down svg { width: 16px; height: 16px; }
.zoom { width: 56px; margin: 0 0 0 2px; }
.font { width: 127px; margin: 0 2px; }
.size { width: 38px; }

.formula { display: flex; height: 16px; flex: none; padding-left: 2px; background: #9ebef5; font-family: "Liberation Sans", sans-serif; font-size: 13px; }
.name { width: 92px; height: 16px; background: #fff; text-align: center; }
.namedrop { width: 18px; }
.namedrop svg { width: 16px; height: 16px; }
.fx { width: 18px; margin-left: 36px; font: italic bold 14px/16px "Liberation Serif", serif; }
.fx small { font-size: 10px; }
.entry { flex: 1; background: #fff; height: 16px; }

.sheet { display: flex; flex: 1; min-height: 0; border-top: 2px solid #9a9783; background: #fff; padding-left: 1px; border-left: 1px solid #aca899; }
.pane { flex: 1; min-width: 0; overflow: hidden; }
table { table-layout: fixed; width: 1178px; border-collapse: separate; border-spacing: 0; font: 13px/16px "Liberation Sans", Arial, sans-serif; }
.w0 { width: 26px; } .wA { width: 77px; } .wB { width: 228px; } .wC { width: 69px; } .wD { width: 83px; }
.wE { width: 255px; } .wF { width: 73px; } .wG { width: 82px; } .wH { width: 50px; } .wI { width: 235px; }
th { height: 17px; box-sizing: border-box; padding: 0; font-weight: normal; background: #efebde; border-right: 1px solid #85836c; border-bottom: 1px solid #85836c; }
th.picked { background: #ffc070; border-color: #000080; }
td { position: relative; height: 17px; padding: 0 2px; box-sizing: border-box; white-space: nowrap; vertical-align: top; line-height: 16px; border: 0 solid #000; }
.tall th, .tall td { height: 18px; }
.banner th { height: 24px; }
.banner td { height: 24px; background: #00f; color: #ff0; font-size: 19px; line-height: 24px; }
.banner td:nth-child(3) { text-align: right; padding-right: 9px; }
.banner td:nth-child(4) { padding-left: 4px; }
.heading th, .heading td { height: 22px; }
.heading td { font-size: 16px; line-height: 19px; font-weight: bold; padding-left: 3px; }
td.group { text-align: center; vertical-align: middle; padding: 0; line-height: 17px; border-right-width: 1px; border-bottom-width: 1px; }
td.under2 { border-bottom-width: 2px; }
.num { text-align: right; padding-right: 3px; }
.start { text-align: left; }
.strong { font-weight: bold; }
.slant { font-style: italic; }
.small { font-size: 11px; }
.edge { border-right-width: 1px; }
.edge2 { border-right-width: 2px; }
.under { border-bottom-width: 1px; }
.grey { background: #c0c0c0; padding-right: 2px; }
.pale { background: #ff9; }
.bright { background: #ff0; box-shadow: -1px -1px #000, inset 1px 1px #000; }
.edge.num { padding-right: 2px; }
.note { position: absolute; top: 0; right: 0; width: 5px; height: 5px; background: linear-gradient(45deg, transparent 50%, #f00 50%); }
.cursor { position: absolute; inset: 0 -2px -2px; border: 3px solid #000; border-top-width: 2px; box-sizing: border-box; z-index: 1; }
.cursor::after { content: ""; position: absolute; right: -4px; bottom: -4px; width: 5px; height: 5px; background: #000; border: solid #fff; border-width: 1px 0 0 1px; }

.vscroll { display: flex; flex-direction: column; width: 16px; padding-right: 2px; background: #f6f5ef; }
.vscroll .split { height: 5px; background: #ece9d8; border-bottom: 1px solid #000; margin-bottom: 1px; }
.vscroll button, .hscroll button { width: 16px; height: 16px; border-radius: 2px; background: linear-gradient(135deg, #d6e3fe, #b5cafb); border: 1px solid #b0c6f5; box-sizing: border-box; }
.vscroll button svg, .hscroll button svg { width: 14px; height: 14px; fill: none; stroke: #43598a; stroke-width: 2.5; }
.thumb { display: grid; place-items: center; box-sizing: border-box; border: 1px solid #98b4f0; border-radius: 2px; }
.thumb i { width: 8px; height: 8px; }
.vscroll .thumb { flex: 0 1 318px; margin-top: 1px; background: linear-gradient(90deg, #cfdcfe, #b8ccfb); }
.vscroll .thumb i { background: repeating-linear-gradient(#eef4fe 0 1px, #8cb0f8 1px 2px); }

.tabs { display: flex; flex: none; height: 17px; padding-left: 1px; background: #ece9d8; border-bottom: 2px solid #fff; border-left: 1px solid #aca899; font-size: 12px; }
.nav { width: 16px; }
.nav svg { width: 16px; height: 16px; stroke: #000; }
.nav:nth-child(4) { border-right: 1px solid #85836c; box-sizing: border-box; }
.slope { width: 10px; height: 17px; fill: none; stroke: #000; }
.tab { height: 17px; width: 18px; border-bottom: 1px solid #000; }
.tab:nth-of-type(5) { width: 33px; }
.tab:nth-of-type(6) { width: 86px; }
.tab.current { width: 18px; font-weight: bold; background: #fff; border-bottom-color: #fff; }
.tabsplit { width: 3px; border: solid #fff; border-width: 0 0 0 1px; background: #aca899; }
.hscroll { display: flex; width: 425px; border-left: 1px solid #000; background: #f6f5ef; }
.hscroll .thumb { width: 155px; margin-left: 1px; background: linear-gradient(#cfdcfe, #b8ccfb); }
.hscroll .thumb i { background: repeating-linear-gradient(90deg, #eef4fe 0 1px, #8cb0f8 1px 2px); }
.corner { width: 17px; border-left: 1px solid #000; margin-left: 2px; }
.foot { height: 27px; }
</style>
